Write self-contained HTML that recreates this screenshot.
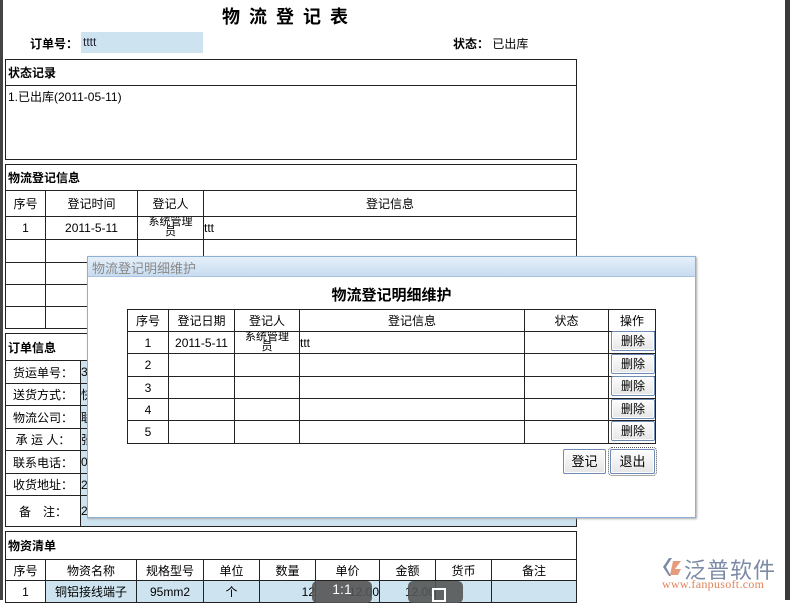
<!DOCTYPE html>
<html><head><meta charset="utf-8"><style>
*{margin:0;padding:0;box-sizing:border-box}
body{width:790px;height:600px;overflow:hidden;background:#fff;position:relative;font-family:"Liberation Sans","Noto Sans CJK SC",sans-serif;font-size:12px;color:#000}
.a{position:absolute}
table{border-collapse:collapse;table-layout:fixed;position:absolute}
td{border:1px solid #222;text-align:center;overflow:hidden;white-space:nowrap;padding:0;font-size:12px}
.hd{font-weight:bold;text-align:left;padding-left:2px}
.bl{background:#cde4f0}
.btn{position:absolute;border:1px solid #6d8bb5;border-radius:2px;background:linear-gradient(#fdfdfd,#e6e6e6);box-shadow:inset 0 0 0 1px #fff;font-size:12px;text-align:center}
.tiny{font-size:11px;line-height:10px;white-space:normal;vertical-align:top;padding:0 8px;word-break:break-all}
</style></head><body>
<div class="a" style="left:0;top:0;width:3px;height:600px;background:#444"></div>
<div class="a" style="left:785px;top:0;width:5px;height:600px;background:#3a3a3a"></div>
<div class="a" style="left:222px;top:3px;font-size:18px;font-weight:bold;letter-spacing:9px">物流登记表</div>
<div class="a" style="left:30px;top:35px;font-weight:bold">订单号：</div>
<div class="a bl" style="left:81px;top:32px;width:122px;height:21px;padding:3px 2px;color:#223">tttt</div>
<div class="a" style="left:453px;top:35px"><b>状态：</b> 已出库</div>

<table style="left:5px;top:59px;width:572px">
<tr style="height:26px"><td class="hd">状态记录</td></tr>
<tr style="height:74px"><td style="text-align:left;vertical-align:top;padding:2px">1.已出库(2011-05-11)</td></tr>
</table>

<table style="left:5px;top:164px;width:572px">
<col style="width:40px"><col style="width:92px"><col style="width:66px"><col>
<tr style="height:26px"><td class="hd" colspan="4">物流登记信息</td></tr>
<tr style="height:26px"><td>序号</td><td>登记时间</td><td>登记人</td><td>登记信息</td></tr>
<tr style="height:23px"><td>1</td><td>2011-5-11</td><td class="tiny">系统管理员</td><td style="text-align:left">ttt</td></tr>
<tr style="height:23px"><td></td><td></td><td></td><td></td></tr>
<tr style="height:22px"><td></td><td></td><td></td><td></td></tr>
<tr style="height:22px"><td></td><td></td><td></td><td></td></tr>
<tr style="height:22px"><td></td><td></td><td></td><td></td></tr>
</table>

<table style="left:5px;top:333px;width:572px">
<col style="width:75px"><col>
<tr style="height:27px"><td class="hd" colspan="2">订单信息</td></tr>
<tr style="height:23px"><td>货运单号：</td><td class="bl" style="text-align:left">3</td></tr>
<tr style="height:22px"><td>送货方式：</td><td class="bl" style="text-align:left">快</td></tr>
<tr style="height:23px"><td>物流公司：</td><td class="bl" style="text-align:left">联</td></tr>
<tr style="height:22px"><td>承 运 人：</td><td class="bl" style="text-align:left">张</td></tr>
<tr style="height:23px"><td>联系电话：</td><td class="bl" style="text-align:left">0</td></tr>
<tr style="height:22px"><td>收货地址：</td><td class="bl" style="text-align:left">2</td></tr>
<tr style="height:31px"><td>备　注：</td><td class="bl" style="text-align:left">2</td></tr>
</table>

<table style="left:5px;top:531px;width:572px">
<col style="width:40px"><col style="width:91px"><col style="width:67px"><col style="width:56px"><col style="width:56px"><col style="width:64px"><col style="width:56px"><col style="width:56px"><col>
<tr style="height:28px"><td class="hd" colspan="9">物资清单</td></tr>
<tr style="height:21px"><td>序号</td><td>物资名称</td><td>规格型号</td><td>单位</td><td>数量</td><td>单价</td><td>金额</td><td>货币</td><td>备注</td></tr>
<tr style="height:22px"><td>1</td><td class="bl">铜铝接线端子</td><td class="bl">95mm2</td><td class="bl">个</td><td class="bl" style="text-align:right">12</td><td class="bl" style="text-align:right">12.00</td><td class="bl" style="text-align:right">12.00</td><td class="bl"></td><td class="bl"></td></tr>
</table>

<div class="a" style="left:312px;top:581px;width:60px;height:22px;background:#555;border-radius:5px;opacity:.9;color:#fff;font-size:14px;text-align:center">1:1</div>
<div class="a" style="left:408px;top:581px;width:55px;height:22px;background:#555;border-radius:5px;opacity:.9"></div>
<div class="a" style="left:432px;top:588px;width:14px;height:14px;border:2px solid #fff"></div>

<div class="a" style="left:87px;top:256px;width:609px;height:262px;border:1px solid #8fb0d6;background:#fff;box-shadow:1px 1px 2px #aaa">
<div style="height:20px;background:linear-gradient(#e6f0fa,#c8dcf0);border-bottom:1px solid #a9c4e3;color:#888;font-size:13px;padding:1px 4px">物流登记明细维护</div>
<div class="a" style="left:0;top:27px;width:607px;text-align:center;font-size:15px;font-weight:bold">物流登记明细维护</div>
<table style="left:39px;top:52px;width:529px">
<col style="width:41px"><col style="width:66px"><col style="width:65px"><col style="width:225px"><col style="width:84px"><col>
<tr style="height:22px"><td>序号</td><td>登记日期</td><td>登记人</td><td>登记信息</td><td>状态</td><td>操作</td></tr>
<tr style="height:22px"><td>1</td><td>2011-5-11</td><td class="tiny">系统管理员</td><td style="text-align:left">ttt</td><td></td><td></td></tr>
<tr style="height:23px"><td>2</td><td></td><td></td><td></td><td></td><td></td></tr>
<tr style="height:22px"><td>3</td><td></td><td></td><td></td><td></td><td></td></tr>
<tr style="height:22px"><td>4</td><td></td><td></td><td></td><td></td><td></td></tr>
<tr style="height:23px"><td>5</td><td></td><td></td><td></td><td></td><td></td></tr>
</table>
<div class="btn" style="left:523px;top:74px;width:44px;height:20px;line-height:18px">删除</div>
<div class="btn" style="left:523px;top:97px;width:44px;height:20px;line-height:18px">删除</div>
<div class="btn" style="left:523px;top:119px;width:44px;height:20px;line-height:18px">删除</div>
<div class="btn" style="left:523px;top:142px;width:44px;height:20px;line-height:18px">删除</div>
<div class="btn" style="left:523px;top:164px;width:44px;height:20px;line-height:18px">删除</div>
<div class="btn" style="left:475px;top:192px;width:43px;height:25px;line-height:23px;font-size:13px">登记</div>
<div class="btn" style="left:522px;top:192px;width:45px;height:25px;line-height:23px;font-size:13px;outline:1px dotted #555;outline-offset:1px">退出</div>
</div>

<div class="a" style="left:661px;top:557px;width:22px;height:20px">
<svg width="22" height="20" viewBox="0 0 22 20"><path d="M8 1 L2 10 L8 19 L10 19 L5 10 L11 1 Z" fill="#7c8aa6"/><path d="M12 4 L20 4 L14 12 L20 12 L17 18 L9 18 Z" fill="#e59c7c"/></svg></div>
<div class="a" style="left:684px;top:553px;font-size:22px;color:#7c8aa6;letter-spacing:1px">泛普软件</div>
<div class="a" style="left:662px;top:577px;font-family:'Liberation Serif',serif;font-size:12px;color:#e0845a;letter-spacing:0.3px">www.fanpusoft.com</div>
</body></html>
